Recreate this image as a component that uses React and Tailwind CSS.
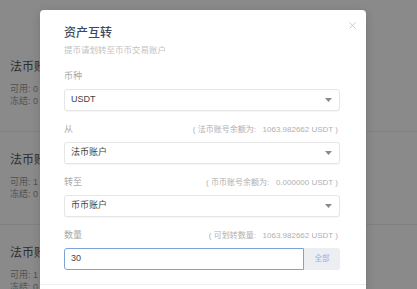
import React from "react";
import { X } from "lucide-react";

const font = { fontFamily: '"Liberation Sans", "Noto Sans CJK SC", sans-serif' };

function Caret() {
  return (
    <svg width="7" height="4" viewBox="0 0 7 4" className="shrink-0">
      <path d="M0 0 L7 0 L3.5 4 Z" fill="#8a8a8a" />
    </svg>
  );
}

function Field({ label, hint, children }) {
  return (
    <div className="mt-[11px]">
      <div className="flex items-center justify-between h-[16px]">
        <span className="text-[9px] text-[#a8a8a8]">{label}</span>
        {hint && (
          <span className="text-[8px] text-[#b0b0b0] whitespace-pre mr-[2px]">
            {hint}
          </span>
        )}
      </div>
      <div className="mt-[4px]">{children}</div>
    </div>
  );
}

function Select({ value }) {
  return (
    <div className="h-[22px] flex items-center justify-between px-[6px] pr-[7px] border border-[#e6e6e6] rounded-[3px] shadow-[0_1px_1px_rgba(0,0,0,0.04)] bg-white">
      <span className="text-[9px] text-[#444]">{value}</span>
      <Caret />
    </div>
  );
}

function Section({ value }) {
  return (
    <div className="h-[93px] border-b border-[#eeeeee] pt-[19px] pl-[10px]">
      <div className="text-[12px] text-[#555] leading-[18px]">法币账户</div>
      <div className="mt-[7px] text-[9px] text-[#999] leading-[12px]">可用: {value}</div>
      <div className="text-[9px] text-[#999] leading-[12px]">冻结: 0</div>
    </div>
  );
}

export default function App() {
  return (
    <div className="relative w-[417px] h-[289px] overflow-hidden bg-white" style={font}>
      {/* page behind the dialog */}
      <div className="pt-[39px]">
        <Section value="0" />
        <Section value="1" />
        <Section value="1" />
      </div>

      {/* backdrop */}
      <div className="absolute inset-0 bg-black/[0.46]" />

      {/* dialog */}
      <div className="absolute left-[40px] top-[10px] w-[326px] h-[300px] bg-white rounded-[4px] shadow-[0_2px_10px_rgba(0,0,0,0.15)]">
        <button className="absolute right-[8px] top-[10px] text-[#b5b5b5]">
          <X size={11} strokeWidth={1.5} />
        </button>
        <div className="pl-[24px] pr-[26px] pt-[14px]">
          <div className="text-[12px] font-medium text-[#3d4a5c] leading-[18px]">资产互转</div>
          <div className="text-[8.5px] text-[#c2c2c2] leading-[12px] mt-[2px]">
            提币请划转至币币交易账户
          </div>

          <div className="pt-[2px]">
            <Field label="币种">
              <Select value="USDT" />
            </Field>
            <Field label="从" hint="( 法币账号余额为:   1063.982662 USDT )">
              <Select value="法币账户" />
            </Field>
            <Field label="转至" hint="( 币币账号余额为:   0.000000 USDT )">
              <Select value="币币账户" />
            </Field>
            <Field label="数量" hint="( 可划转数量:   1063.982662 USDT )">
              <div className="flex h-[22px]">
                <div className="flex-1 flex items-center px-[6px] border border-[#7ea1d6] rounded-l-[3px] text-[9px] text-[#444]">
                  30
                </div>
                <div className="w-[36px] flex items-center justify-center bg-[#eceef2] rounded-r-[3px] text-[7.5px] text-[#8fb3e6]">
                  全部
                </div>
              </div>
            </Field>
          </div>
        </div>
        <div className="mt-[14px] border-t border-[#eeeeee]" />
      </div>
    </div>
  );
}
